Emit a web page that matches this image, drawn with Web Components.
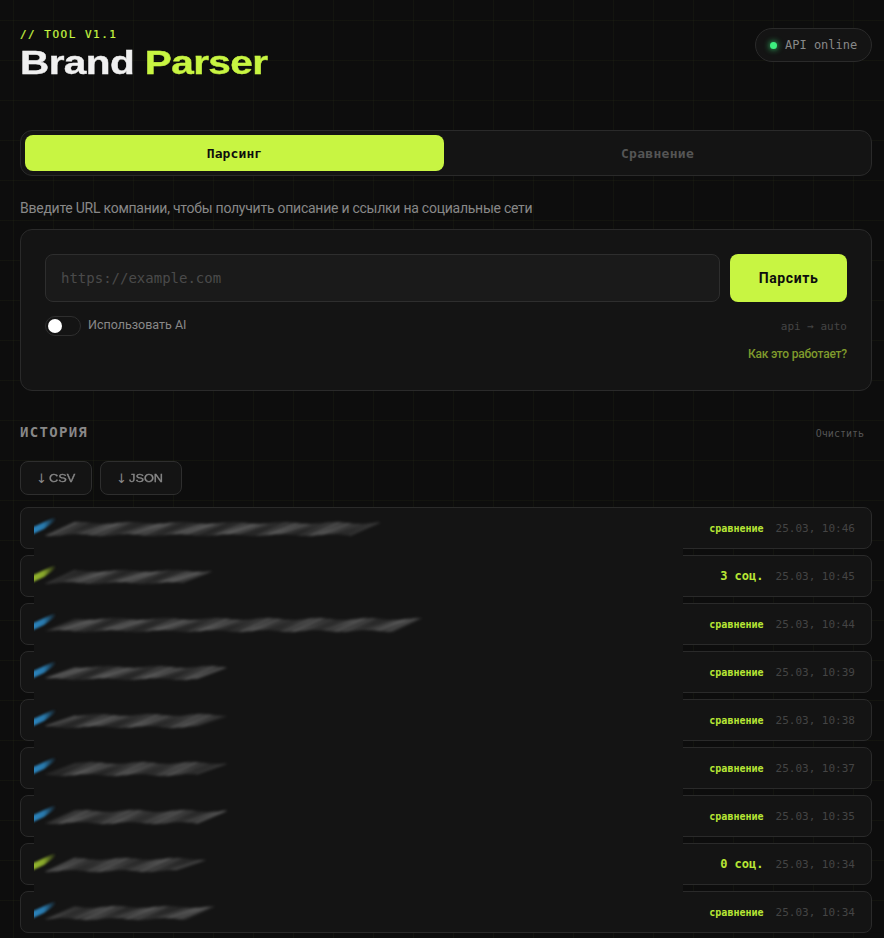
<!DOCTYPE html>
<html lang="ru">
<head>
<meta charset="utf-8">
<title>Brand Parser</title>
<style>
  html, body { margin: 0; height: 938px; overflow: hidden; }
  body {
    background-color: #0d0d0d;
    background-image:
      linear-gradient(rgba(200,245,66,.03) 1px, transparent 1px),
      linear-gradient(90deg, rgba(200,245,66,.03) 1px, transparent 1px);
    background-size: 40px 40px;
    background-position: 13px 20px;
    font-family: Roboto, "Noto Sans", sans-serif;
    color: #f0f0f0;
  }
</style>
</head>
<body>
<parser-app></parser-app>

<script>
const MONO = '"DejaVu Sans Mono", "Liberation Mono", monospace';
const SANS = 'Roboto, "Noto Sans", sans-serif';

class ParserHeader extends HTMLElement {
  constructor() {
    super();
    this.attachShadow({ mode: "open" }).innerHTML = `<style>
      :host { display: flex; justify-content: space-between; align-items: flex-start; height: 130px; }
      .tag { font: 400 11px/13px ${MONO}; letter-spacing: 1.5px; color: #c8f542; margin-top: 28px; -webkit-text-stroke: .2px currentColor; }
      h1 { margin: 4px 0 0; font: 700 33.5px/36px "Liberation Sans", sans-serif; letter-spacing: -.5px; color: #f0f0f0;
           transform: scaleX(1.21); transform-origin: left; white-space: nowrap; -webkit-text-stroke: .4px currentColor; }
      h1 span { color: #c8f542; }
      .status { display: flex; align-items: center; gap: 8px; width: 117px; height: 34px; margin-top: 28px; padding: 0 0 0 14px; box-sizing: border-box;
        border: 1px solid #2a2a2a; border-radius: 17px; background: #141414; font: 400 12px ${MONO}; color: #888; white-space: nowrap; }
      .dot { flex: none; width: 7px; height: 7px; border-radius: 50%; background: #3df07f; box-shadow: 0 0 6px #3df07f; }
    </style>
    <div><div class="tag">// TOOL V1.1</div><h1>Brand <span>Parser</span></h1></div>
    <div class="status"><i class="dot"></i>API online</div>`;
  }
}

class ParserTabs extends HTMLElement {
  constructor() {
    super();
    this.attachShadow({ mode: "open" }).innerHTML = `<style>
      :host { display: grid; grid-template-columns: 1fr 1fr; gap: 4px; height: 46px; padding: 4px; box-sizing: border-box;
        background: #141414; border: 1px solid #2a2a2a; border-radius: 12px; }
      div { display: flex; align-items: center; justify-content: center; border-radius: 8px;
        font: 700 13px ${MONO}; letter-spacing: .3px; color: #555; }
      .on { background: #c8f542; color: #0d0d0d; letter-spacing: .1px; }
    </style>
    <div class="on">Парсинг</div><div>Сравнение</div>`;
  }
}

class ParserForm extends HTMLElement {
  constructor() {
    super();
    this.attachShadow({ mode: "open" }).innerHTML = `<style>
      :host { display: block; height: 162px; box-sizing: border-box; padding: 24px; background: #141414;
        border: 1px solid #2a2a2a; border-radius: 12px; }
      .line { display: flex; gap: 10px; }
      .url { flex: 1; height: 48px; box-sizing: border-box; display: flex; align-items: center; padding: 0 16px 0 15px;
        background: #1a1a1a; border: 1px solid #2e2e2e; border-radius: 8px; font: 400 14px ${MONO}; color: #4a4a4a; }
      .go { width: 117px; height: 48px; display: flex; align-items: center; justify-content: center; border-radius: 8px;
        background: #c8f542; color: #0d0d0d; font: 700 14px ${SANS}; letter-spacing: .6px; }
      .opts { display: flex; align-items: center; justify-content: space-between; margin-top: 14px; height: 20px; }
      .ai { display: flex; align-items: center; gap: 7px; font: 400 12.5px/18px ${SANS}; color: #888; }
      .sw { width: 36px; height: 20px; box-sizing: border-box; border: 1px solid #2e2e2e; border-radius: 10px; background: #141414; padding: 2px; }
      .sw i { display: block; width: 14px; height: 14px; border-radius: 50%; background: #fff; }
      .mode { font: 400 11px ${MONO}; color: #444; }
      .how { margin-top: 11px; text-align: right; font: 500 12px ${SANS}; color: #7f9a2c; letter-spacing: -.2px; }
    </style>
    <div class="line"><div class="url">https://example.com</div><div class="go">Парсить</div></div>
    <div class="opts"><div class="ai"><div class="sw"><i></i></div><span style="margin-top:-2px">Использовать AI</span></div><div class="mode">api → auto</div></div>
    <div class="how">Как это работает?</div>`;
  }
}

class HistoryHead extends HTMLElement {
  constructor() {
    super();
    this.attachShadow({ mode: "open" }).innerHTML = `<style>
      :host { display: block; }
      .top { display: flex; justify-content: space-between; align-items: center; height: 20px; padding-right: 8px; margin-top: -2px; }
      .title { font: 700 14px ${MONO}; letter-spacing: 1.3px; color: #888; }
      .clear { font: 400 10px ${MONO}; color: #555; margin-top: 2px; }
      .btns { display: flex; gap: 8px; margin-top: 19px; }
      .btn { height: 34px; box-sizing: border-box; display: flex; align-items: center; gap: 3px; padding: 0 0 0 15px; border: 1px solid #2e2e2e; border-radius: 8px;
        background: #141414; color: #888; }
      .arrow { font: 400 13px "DejaVu Sans", sans-serif; width: 10px; }
      .label { font: 400 11px "Liberation Sans", sans-serif; -webkit-text-stroke: .3px currentColor; transform: scaleX(1.16); transform-origin: left; white-space: nowrap; }
    </style>
    <div class="top"><div class="title">ИСТОРИЯ</div><div class="clear">Очистить</div></div>
    <div class="btns">
      <div class="btn" style="width:72px"><span class="arrow">↓</span><span class="label">CSV</span></div>
      <div class="btn" style="width:82px"><span class="arrow">↓</span><span class="label">JSON</span></div>
    </div>`;
  }
}

// размытый адрес: диагональные штрихи, как на скриншоте
class BlurUrl extends HTMLElement {
  connectedCallback() { this.render(); }
  render() {
    const root = this.shadowRoot || this.attachShadow({ mode: "open" });
    const end = +this.getAttribute("end");
    const accent = this.getAttribute("accent");
    const seed = +this.getAttribute("seed") || 1;
    let strokes = "";
    for (let x = 12, i = 0; x < end - 30; x += 3, i++) {
      const word = .55 + .45 * Math.sin(i * .42 + seed * 1.7);
      const o = (.06 + .13 * Math.abs(Math.sin(i * .9 + seed))) * word + .05;
      const lift = 2 * Math.sin(i * .37 + seed);
      strokes += `<line x1="${x}" y1="${28 + lift / 2}" x2="${x + 30}" y2="${16 - lift / 2}" stroke="#b4b4b4" stroke-opacity="${o.toFixed(2)}" stroke-width="2.4"/>`;
    }
    root.innerHTML = `<style>
      :host { display: block; position: absolute; left: 0; top: 0; width: 400px; height: 42px; }
      svg { display: block; }
    </style>
    <svg width="420" height="42" viewBox="0 0 420 42" aria-hidden="true">
      <defs>
        <filter id="b" x="-5%" y="-60%" width="110%" height="220%"><feGaussianBlur stdDeviation="1.6 1.3"/></filter>
        <linearGradient id="f" gradientUnits="userSpaceOnUse" x1="0" y1="0" x2="22" y2="0">
          <stop offset="0" stop-color="${accent}"/><stop offset=".45" stop-color="${accent}" stop-opacity=".9"/><stop offset="1" stop-color="${accent}" stop-opacity="0"/>
        </linearGradient>
      </defs>
      <g filter="url(#b)">${strokes}</g>
      <path d="M-3 21L19 11Q24 10 21 14L10 22L-3 28Z" fill="url(#f)" style="filter:blur(.9px)"/>
    </svg>`;
  }
}

class HistoryRow extends HTMLElement {
  constructor() {
    super();
    this.attachShadow({ mode: "open" }).innerHTML = `<style>
      :host { display: flex; align-items: center; justify-content: flex-end; gap: 12px; height: 42px; box-sizing: border-box; padding: 0 16px;
        background: #141414; border: 1px solid #2a2a2a; border-radius: 8px; }
      .kind { font: 700 10px ${MONO}; color: #b8e635; }
      :host([social]) .kind { font-size: 12px; }
      .time { font: 400 11px ${MONO}; color: #444; }
    </style>
    <span class="kind"><slot name="kind"></slot></span><span class="time"><slot name="time"></slot></span>`;
  }
}

const ROWS = [
  ["сравнение", "25.03, 10:46", 346, "#2b84bd"],
  ["3 соц.", "25.03, 10:45", 178, "#93b52d"],
  ["сравнение", "25.03, 10:44", 390, "#2b84bd"],
  ["сравнение", "25.03, 10:39", 195, "#2b84bd"],
  ["сравнение", "25.03, 10:38", 195, "#2b84bd"],
  ["сравнение", "25.03, 10:37", 195, "#2b84bd"],
  ["сравнение", "25.03, 10:35", 195, "#2b84bd"],
  ["0 соц.", "25.03, 10:34", 172, "#93b52d"],
  ["сравнение", "25.03, 10:34", 181, "#2b84bd"],
];

class HistoryList extends HTMLElement {
  constructor() {
    super();
    const root = this.attachShadow({ mode: "open" });
    root.innerHTML = `<style>
      :host { display: flex; flex-direction: column; gap: 6px; position: relative; margin-top: 12px; }
      .cover { position: absolute; left: 14px; width: 649px; top: 41px; height: 345px; background: #141414; }
      .blur { position: absolute; left: 14px; width: 649px; height: 42px; overflow: hidden; }
    </style>`;
    ROWS.forEach((r) => {
      const row = document.createElement("history-row");
      if (r[0].includes("соц")) row.setAttribute("social", "");
      row.innerHTML = `<span slot="kind">${r[0]}</span><span slot="time">${r[1]}</span>`;
      root.appendChild(row);
    });
    const cover = document.createElement("div");
    cover.className = "cover";
    root.appendChild(cover);
    ROWS.forEach((r, i) => {
      const wrap = document.createElement("div");
      wrap.className = "blur";
      wrap.style.top = i * 48 + "px";
      wrap.innerHTML = `<blur-url end="${r[2]}" accent="${r[3]}" seed="${i + 1}"></blur-url>`;
      root.appendChild(wrap);
    });
  }
}

class ParserApp extends HTMLElement {
  constructor() {
    super();
    this.attachShadow({ mode: "open" }).innerHTML = `<style>
      :host { display: block; box-sizing: border-box; width: 884px; padding: 0 12px 0 20px; }
      .hint { margin: 24px 0 12px; font: 400 14px/17px ${SANS}; letter-spacing: -.25px; color: #888; }
      history-head { margin-top: 33px; }
    </style>
    <parser-header></parser-header>
    <parser-tabs></parser-tabs>
    <p class="hint">Введите URL компании, чтобы получить описание и ссылки на социальные сети</p>
    <parser-form></parser-form>
    <history-head></history-head>
    <history-list></history-list>`;
  }
}

customElements.define("parser-header", ParserHeader);
customElements.define("parser-tabs", ParserTabs);
customElements.define("parser-form", ParserForm);
customElements.define("history-head", HistoryHead);
customElements.define("blur-url", BlurUrl);
customElements.define("history-row", HistoryRow);
customElements.define("history-list", HistoryList);
customElements.define("parser-app", ParserApp);
</script>
</body>
</html>
